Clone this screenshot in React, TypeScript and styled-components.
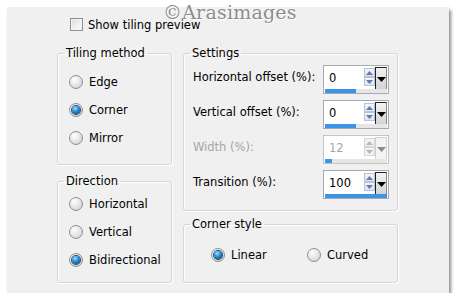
import React from 'react'
import styled, { createGlobalStyle } from 'styled-components'

const Global = createGlobalStyle`
  html, body {
    margin: 0;
    padding: 0;
    background: #ffffff;
  }
  body {
    font-family: "DejaVu Sans", "Liberation Sans", sans-serif;
    font-size: 11.5px;
    color: #000;
  }
`

const Panel = styled.div`
  position: relative;
  box-sizing: border-box;
  margin: 7px 0 0 7px;
  width: 442px;
  height: 286px;
  background: #f0f0f0;
  box-shadow: 2px 3px 3px rgba(0, 0, 0, 0.45);
  padding: 11px 0 0 50px;
`

const Watermark = styled.div`
  position: absolute;
  left: 156px;
  top: -6px;
  font-family: "DejaVu Serif", "Liberation Serif", serif;
  font-size: 19px;
  letter-spacing: 0.2px;
  color: #8c8c8c;
  text-shadow: 0 0 1px #fff, 1px 1px 0 #fff;
  pointer-events: none;
`

const CheckRow = styled.label`
  display: flex;
  align-items: center;
  gap: 5px;
  margin-left: 13px;
  height: 13px;
`

const CheckBox = styled.span`
  box-sizing: border-box;
  width: 13px;
  height: 13px;
  border: 1px solid #8e8f8f;
  background: linear-gradient(135deg, #dcdcdc 0%, #f4f4f4 70%, #ffffff 100%);
  box-shadow: inset 0 0 0 1px #f4f4f4;
`

const Columns = styled.div`
  display: flex;
  gap: 11px;
  margin-top: 16px;
`

const Column = styled.div<{ $w: number; $gap: number }>`
  display: flex;
  flex-direction: column;
  width: ${p => p.$w}px;
  gap: ${p => p.$gap}px;
`

const Group = styled.fieldset<{ $h: number; $top: number }>`
  box-sizing: border-box;
  margin: 0;
  min-width: 0;
  height: ${p => p.$h}px;
  border: 1px solid #d5d5d5;
  border-radius: 3px;
  box-shadow: inset 1px 1px 0 #ffffff, 1px 1px 0 #ffffff;
  padding: ${p => p.$top}px 0 0 0;
`

const Legend = styled.legend`
  margin: 0 0 0 6px;
  padding: 0 2px;
  line-height: 13px;
`

const RadioList = styled.div<{ $row: boolean; $inset: number }>`
  display: flex;
  flex-direction: ${p => (p.$row ? 'row' : 'column')};
  padding-left: ${p => p.$inset}px;
`

const RadioRow = styled.label<{ $w?: number }>`
  display: flex;
  align-items: center;
  gap: 6px;
  height: 28px;
  width: ${p => (p.$w ? `${p.$w}px` : 'auto')};
`

const RadioDot = styled.span<{ $on: boolean }>`
  position: relative;
  box-sizing: border-box;
  width: 14px;
  height: 14px;
  border-radius: 50%;
  border: 1px solid #8e8f8f;
  background: radial-gradient(circle at 35% 30%, #ffffff 0%, #e8e8e8 45%, #c9c9c9 100%);
  flex: none;

  &::after {
    content: '';
    display: ${p => (p.$on ? 'block' : 'none')};
    position: absolute;
    left: 2px;
    top: 2px;
    width: 8px;
    height: 8px;
    border-radius: 50%;
    background: radial-gradient(circle at 40% 30%, #a8e0ff 0%, #3a9ee0 35%, #0c5a98 75%, #0a3d6c 100%);
    box-shadow: 0 0 0 1px #1d4f7c;
  }
`

const FieldList = styled.div`
  display: flex;
  flex-direction: column;
  gap: 6px;
  padding: 0 8px 0 9px;
`

const FieldRow = styled.div`
  display: flex;
  justify-content: space-between;
  align-items: flex-start;
  height: 29px;
`

const FieldLabel = styled.span<{ $off?: boolean }>`
  padding-top: 5px;
  color: ${p => (p.$off ? '#a6a6a6' : '#000')};
`

const Spin = styled.div<{ $off?: boolean }>`
  position: relative;
  box-sizing: border-box;
  width: 66px;
  height: 29px;
  border: 1px solid ${p => (p.$off ? '#c4c4c4' : '#a6abb2')};
  background: #fff;
  display: flex;
`

const SpinValue = styled.div<{ $off?: boolean }>`
  flex: 1;
  padding: 5px 0 0 5px;
  color: ${p => (p.$off ? '#a6a6a6' : '#000')};
`

const Arrows = styled.div`
  display: flex;
  flex-direction: column;
  margin-top: 2px;
  width: 11px;
`

const ArrowBtn = styled.div<{ $off?: boolean }>`
  box-sizing: border-box;
  width: 11px;
  height: 9px;
  border: 1px solid ${p => (p.$off ? '#d6d6d6' : '#b8c4d6')};
  background: ${p => (p.$off ? '#f2f2f2' : 'linear-gradient(#f3f6fb, #dde5f0)')};
  display: flex;
  align-items: center;
  justify-content: center;
`

const Drop = styled.div<{ $off?: boolean }>`
  box-sizing: border-box;
  width: 12px;
  height: 25px;
  margin: 1px 1px 0 0;
  border-left: 1px solid ${p => (p.$off ? '#d0d0d0' : '#202020')};
  border-top: 1px solid ${p => (p.$off ? '#d0d0d0' : '#202020')};
  border-right: 1px solid ${p => (p.$off ? '#d0d0d0' : '#888')};
  background: ${p => (p.$off ? '#f4f4f4' : 'linear-gradient(#f2f2f2, #cfcfcf)')};
  display: flex;
  justify-content: center;
  padding-top: 9px;
`

const Bar = styled.div`
  position: absolute;
  left: 1px;
  right: 1px;
  bottom: 0;
  height: 4px;
  background: #e6e6e6;
`

const Fill = styled.div`
  height: 100%;
  background: #3c94e8;
`

function Tri({ up, color, w = 7, h = 4 }: { up: boolean; color: string; w?: number; h?: number }) {
  return (
    <svg width={w} height={h} viewBox={`0 0 ${w} ${h}`}>
      <polygon
        points={up ? `0,${h} ${w / 2},0 ${w},${h}` : `0,0 ${w},0 ${w / 2},${h}`}
        fill={color}
      />
    </svg>
  )
}

function SpinBox({ value, pct, off }: { value: string; pct: number; off?: boolean }) {
  return (
    <Spin $off={off}>
      <SpinValue $off={off}>{value}</SpinValue>
      <Arrows>
        <ArrowBtn $off={off}>
          <Tri up color={off ? '#b8b8b8' : '#6877b0'} />
        </ArrowBtn>
        <ArrowBtn $off={off}>
          <Tri up={false} color={off ? '#b8b8b8' : '#6877b0'} />
        </ArrowBtn>
      </Arrows>
      <Drop $off={off}>
        <Tri up={false} color={off ? '#8a8a8a' : '#000'} w={9} h={5} />
      </Drop>
      <Bar>
        <Fill style={{ width: `${pct}%` }} />
      </Bar>
    </Spin>
  )
}

function Radio({ label, on, w }: { label: string; on?: boolean; w?: number }) {
  return (
    <RadioRow $w={w}>
      <RadioDot $on={!!on} />
      {label}
    </RadioRow>
  )
}

export default function App() {
  return (
    <>
      <Global />
      <Panel>
        <Watermark>©Arasimages</Watermark>
        <CheckRow>
          <CheckBox />
          Show tiling preview
        </CheckRow>
        <Columns>
          <Column $w={115} $gap={10}>
            <Group $h={118} $top={8}>
              <Legend>Tiling method</Legend>
              <RadioList $row={false} $inset={11}>
                <Radio label="Edge" />
                <Radio label="Corner" on />
                <Radio label="Mirror" />
              </RadioList>
            </Group>
            <Group $h={108} $top={2}>
              <Legend>Direction</Legend>
              <RadioList $row={false} $inset={11}>
                <Radio label="Horizontal" />
                <Radio label="Vertical" />
                <Radio label="Bidirectional" on />
              </RadioList>
            </Group>
          </Column>
          <Column $w={215} $gap={7}>
            <Group $h={164} $top={5}>
              <Legend>Settings</Legend>
              <FieldList>
                <FieldRow>
                  <FieldLabel>Horizontal offset (%):</FieldLabel>
                  <SpinBox value="0" pct={50} />
                </FieldRow>
                <FieldRow>
                  <FieldLabel>Vertical offset (%):</FieldLabel>
                  <SpinBox value="0" pct={50} />
                </FieldRow>
                <FieldRow>
                  <FieldLabel $off>Width (%):</FieldLabel>
                  <SpinBox value="12" pct={11} off />
                </FieldRow>
                <FieldRow>
                  <FieldLabel>Transition (%):</FieldLabel>
                  <SpinBox value="100" pct={100} />
                </FieldRow>
              </FieldList>
            </Group>
            <Group $h={65} $top={10}>
              <Legend>Corner style</Legend>
              <RadioList $row $inset={27}>
                <Radio label="Linear" on w={96} />
                <Radio label="Curved" />
              </RadioList>
            </Group>
          </Column>
        </Columns>
      </Panel>
    </>
  )
}
